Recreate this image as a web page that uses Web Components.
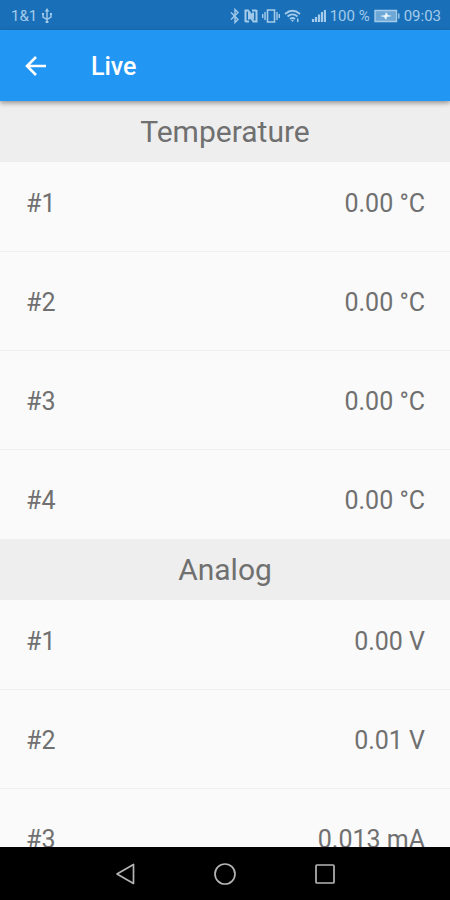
<!DOCTYPE html>
<html lang="en">
<head>
<meta charset="utf-8">
<meta name="viewport" content="width=device-width, initial-scale=1">
<title>Live</title>
<style>
  html, body { margin: 0; height: 100%; }
  body { font-family: Roboto, "Liberation Sans", sans-serif; background: #fafafa; }
</style>
</head>
<body>
<live-screen>
  <status-bar slot="status" carrier="1&amp;1" battery="100 %" time="09:03"></status-bar>
  <app-bar slot="bar">Live</app-bar>
  <reading-section heading="Temperature">
    <reading-row label="#1">0.00 °C</reading-row>
    <reading-row label="#2">0.00 °C</reading-row>
    <reading-row label="#3">0.00 °C</reading-row>
    <reading-row label="#4">0.00 °C</reading-row>
  </reading-section>
  <reading-section heading="Analog">
    <reading-row label="#1">0.00 V</reading-row>
    <reading-row label="#2">0.01 V</reading-row>
    <reading-row label="#3">0.013 mA</reading-row>
  </reading-section>
  <nav-bar slot="nav"></nav-bar>
</live-screen>
<script>
class ShadowElement extends HTMLElement {
  constructor() {
    super();
    this.attachShadow({ mode: 'open' }).innerHTML = this.constructor.markup;
  }
  connectedCallback() {
    for (const el of this.shadowRoot.querySelectorAll('[data-attr]')) {
      el.textContent = this.getAttribute(el.dataset.attr) || '';
    }
  }
}

customElements.define('live-screen', class extends ShadowElement {
  static markup = `
    <style>
      :host { display: flex; flex-direction: column; height: 100vh; overflow: hidden; }
      main { flex: 1; min-height: 0; overflow-y: auto; scrollbar-width: none; }
    </style>
    <slot name="status"></slot>
    <slot name="bar"></slot>
    <main><slot></slot></main>
    <slot name="nav"></slot>`;
});

customElements.define('status-bar', class extends ShadowElement {
  static markup = `
    <style>
      :host { display: flex; align-items: center; justify-content: space-between; height: 30px; padding: 2px 9px 0 11px;
        box-sizing: border-box; flex: none; background: #1a70b8; color: #a4cbea; font-size: 15px; line-height: 16px; }
      div { display: flex; align-items: center; gap: 4px; }
      svg { display: block; fill: none; stroke: currentColor; stroke-width: 1.4; }
      .signal { margin-left: 6px; }
    </style>
    <div>
      <span data-attr="carrier"></span>
      <svg width="12" height="16" viewBox="0 0 12 16" aria-label="USB"><path d="M6 2v12M2 6v3l4 2.500L10 9V6"/><path d="M6 0l2.200 3.500H3.800zM4.600 13h2.800v2H4.600zM1 5h2v2H1zM9 5h2v2H9z" fill="currentColor" stroke="none"/></svg>
    </div>
    <div>
      <svg width="10" height="16" viewBox="0 0 10 16" aria-label="Bluetooth"><path d="M1 4.500l7 7-3 3V1.500l3 3-7 7"/></svg>
      <svg width="14" height="14" viewBox="0 0 14 14" aria-label="NFC"><path d="M1.500 13V1.500H4l5 6.500V3.500M5 10.500V6l4.500 6.500h3V1" stroke-width="2"/><path d="M1.500 12.500H5M8 1.500h4.500" stroke-width="1.800"/></svg>
      <svg width="18" height="14" viewBox="0 0 18 14" aria-label="Vibrate"><path d="M5.500 1h7v12h-7z" stroke-width="1.600"/><path d="M3 3v8M15 3v8M.7 5v4M17.300 5v4"/></svg>
      <svg width="17" height="14" viewBox="0 0 17 14" aria-label="Wi-Fi"><path d="M1 5q7.500-6.500 15 0M3.500 7.500q5-4.300 10 0M6 10q2.500-2 5 0" stroke-width="1.700"/><path d="M7 11h3l-1.500 2zM13 9.500h1.500V13H13z" fill="currentColor" stroke="none"/></svg>
      <svg class="signal" width="15" height="14" viewBox="0 0 15 14" aria-label="Signal"><path d="M2 10v3M5 8v5M8 5.500V13M11 3v10M14 1v12" stroke-width="2.200"/></svg>
      <span data-attr="battery"></span>
      <svg width="26" height="14" viewBox="0 0 26 14" aria-label="Battery charging"><path d="M1 1.500h21.500v11H1z" fill="currentColor" fill-opacity=".6"/><path d="M24.800 4.500v5"/><path d="M6 7l5-1 1-3 2 3 4 1-5 1-1 3-2-3z" fill="#e6f3fc" stroke="none"/></svg>
      <span data-attr="time"></span>
    </div>`;
});

customElements.define('app-bar', class extends ShadowElement {
  static markup = `
    <style>
      :host { display: flex; align-items: center; gap: 31px; height: 71px; padding: 2px 12px 0; box-sizing: border-box; flex: none;
        position: relative; background: #2196f3; color: #fff; box-shadow: 0 2px 5px rgba(0,0,0,.4); }
      button { display: grid; place-items: center; width: 48px; height: 48px; padding: 0; border: 0; background: none; color: inherit; }
      h1 { margin: 0; font-size: 25px; line-height: 32px; font-weight: 500; }
      svg { fill: none; stroke: currentColor; stroke-width: 2.600; }
    </style>
    <button type="button" aria-label="Back"><svg width="24" height="24" viewBox="0 0 24 24"><path d="M22 11H4M12 2l-9 9 9 9"/></svg></button>
    <h1><slot></slot></h1>`;
});

customElements.define('reading-section', class extends ShadowElement {
  static markup = `
    <style>
      :host { display: block; }
      h2 { margin: 0; padding: 12px; background: #eeeeee; color: #707070; text-align: center; font-size: 30px; line-height: 37px; font-weight: 400; }
    </style>
    <h2 data-attr="heading"></h2>
    <div><slot></slot></div>`;
});

customElements.define('reading-row', class extends ShadowElement {
  static markup = `
    <style>
      :host { display: block; color: #707070; font-size: 25px; line-height: 32px; }
      .row { display: flex; justify-content: space-between; padding: 26px 25px 22px 26px; }
      hr { margin: 9px 0; border: 0; height: 1px; background: #f0f0f0; }
      :host(:last-of-type) hr { display: none; }
    </style>
    <div class="row"><span data-attr="label"></span><span><slot></slot></span></div>
    <hr>`;
});

customElements.define('nav-bar', class extends ShadowElement {
  static markup = `
    <style>
      :host { display: flex; justify-content: center; gap: 52px; height: 53px; flex: none; background: #000; color: #b5b5b5; position: relative; }
      button { display: grid; place-items: center; width: 48px; padding: 0; border: 0; background: none; color: inherit; }
      svg { fill: none; stroke: currentColor; stroke-width: 1.700; stroke-linejoin: round; }
    </style>
    <button type="button" aria-label="Back"><svg width="24" height="24" viewBox="0 0 24 24"><path d="M20.500 2.500v19L4 12z"/></svg></button>
    <button type="button" aria-label="Home"><svg width="24" height="24" viewBox="0 0 24 24"><circle cx="12" cy="12" r="10"/></svg></button>
    <button type="button" aria-label="Recent apps"><svg width="24" height="24" viewBox="0 0 24 24"><rect x="3" y="3" width="18" height="18" rx="1"/></svg></button>`;
});
</script>
</body>
</html>
